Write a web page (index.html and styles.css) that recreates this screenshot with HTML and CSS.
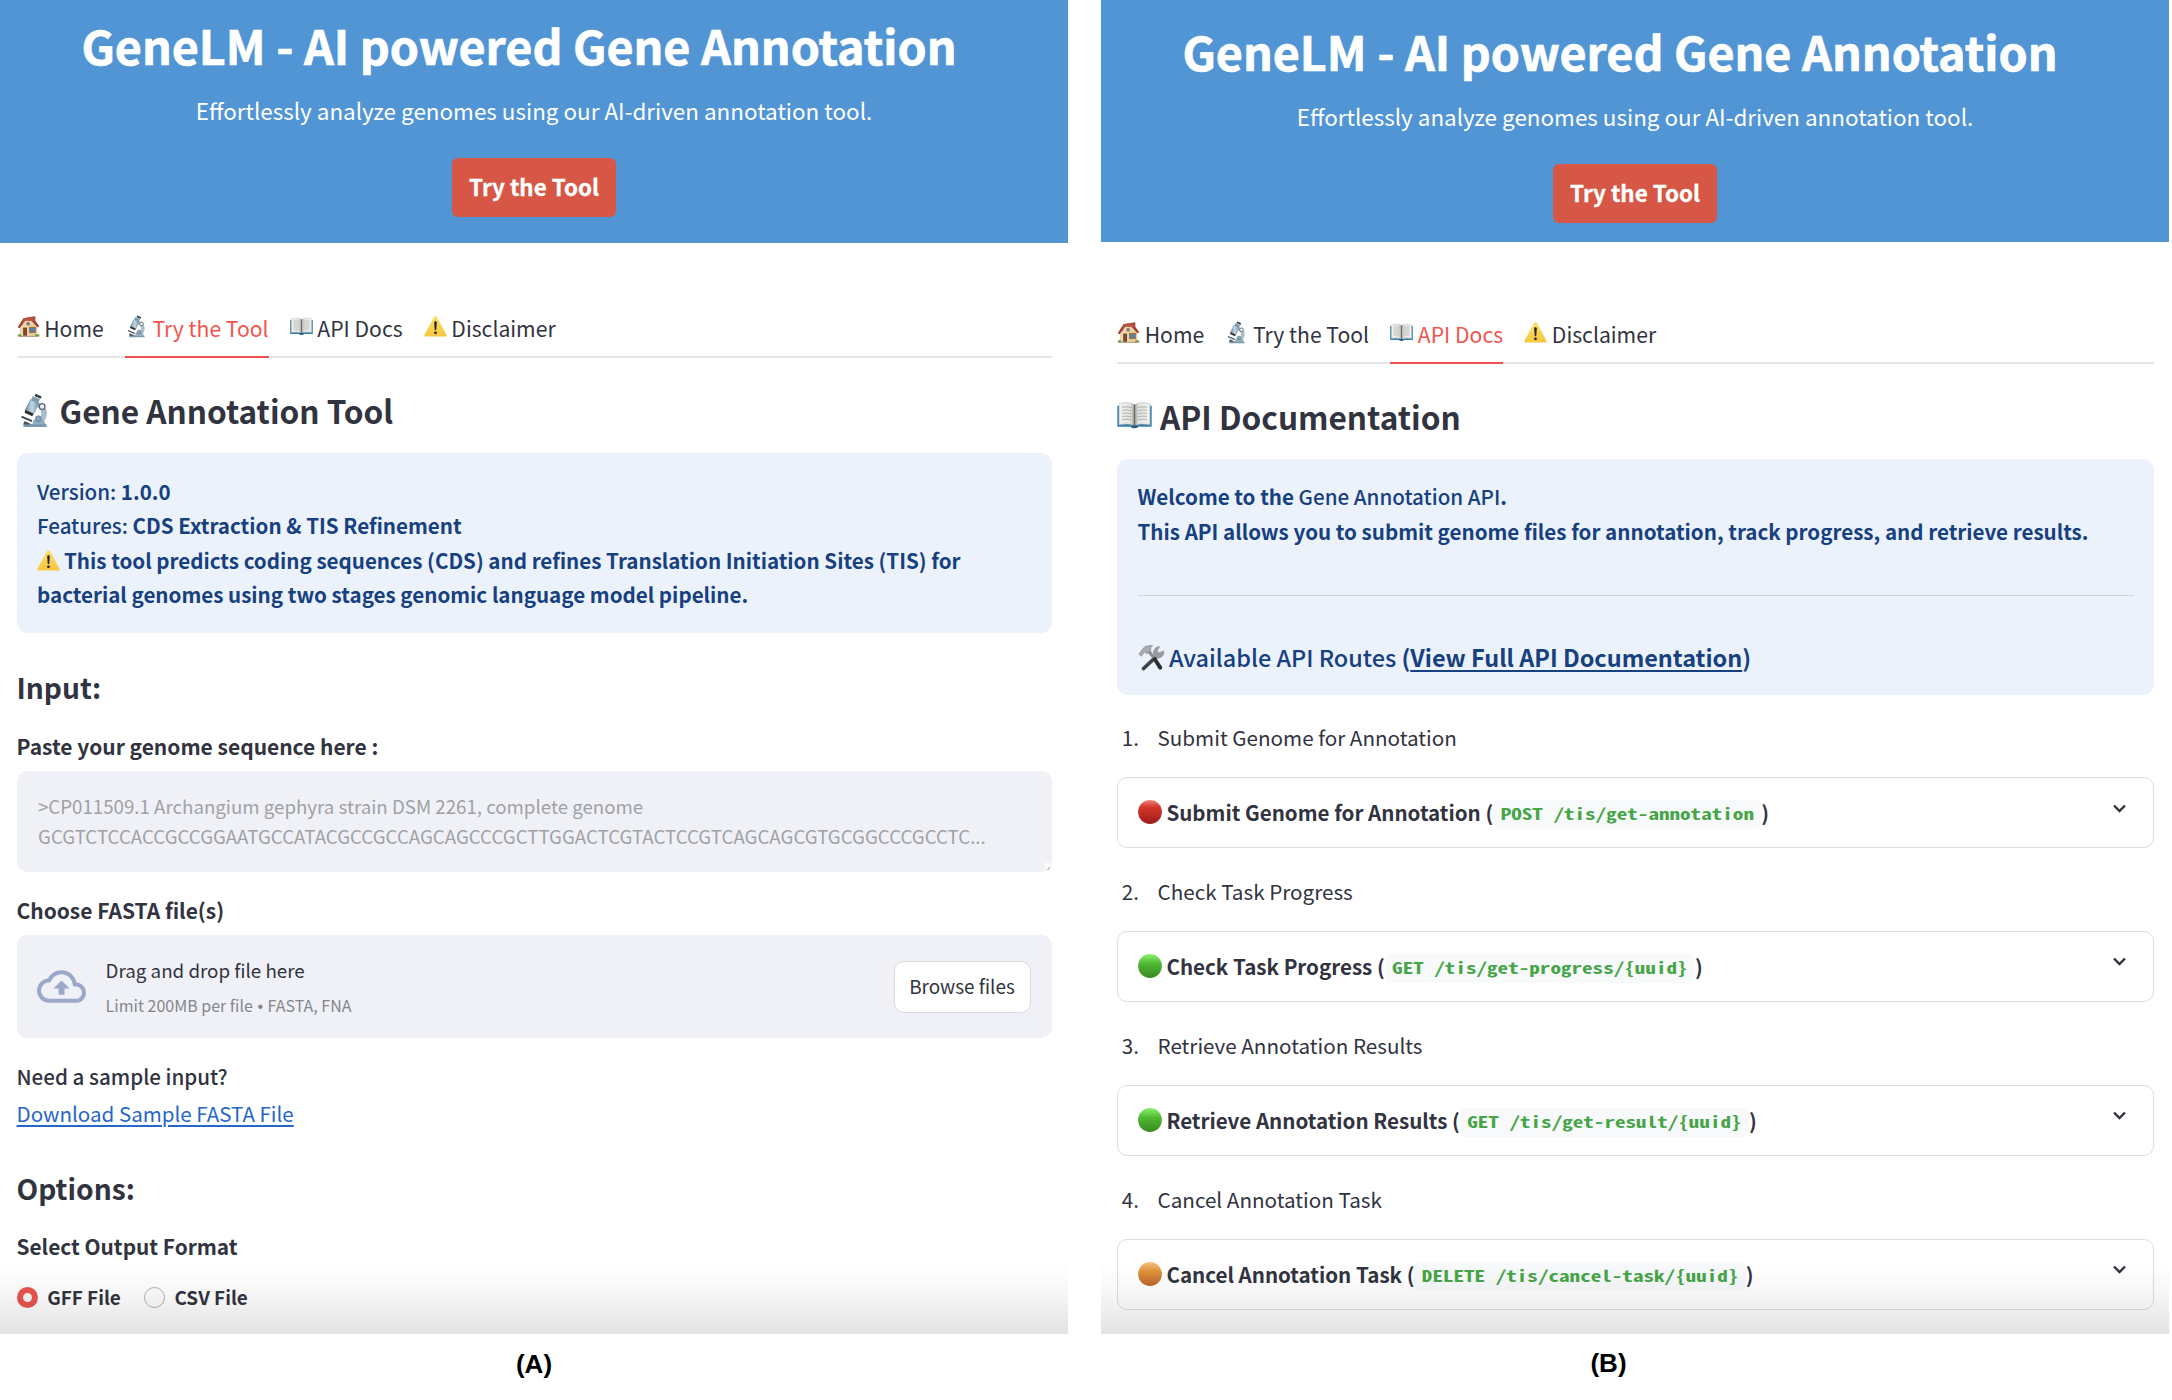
FILE: index.html
```html
<!DOCTYPE html>
<html lang="en">
<head>
<meta charset="utf-8">
<title>GeneLM - AI powered Gene Annotation</title>
<link rel="stylesheet" href="styles.css">
</head>
<body>
<svg class="defs" aria-hidden="true">
  <defs>
    <linearGradient id="g-red" x1="0" y1="0" x2="0" y2="1"><stop offset="0" stop-color="#e8837c"/><stop offset=".3" stop-color="#d5362b"/><stop offset="1" stop-color="#9c1d18"/></linearGradient>
    <linearGradient id="g-green" x1="0" y1="0" x2="0" y2="1"><stop offset="0" stop-color="#8ef06c"/><stop offset=".4" stop-color="#4fb834"/><stop offset="1" stop-color="#38891f"/></linearGradient>
    <linearGradient id="g-orange" x1="0" y1="0" x2="0" y2="1"><stop offset="0" stop-color="#f3c27c"/><stop offset=".4" stop-color="#df9138"/><stop offset="1" stop-color="#b9642a"/></linearGradient>
    <linearGradient id="g-warn" x1="0" y1="0" x2="0" y2="1"><stop offset="0" stop-color="#fbe06a"/><stop offset="1" stop-color="#f7c63f"/></linearGradient>
    <linearGradient id="g-tube" x1="0" y1="0" x2="1" y2="0"><stop offset="0" stop-color="#6e8ba0"/><stop offset=".5" stop-color="#c3d8e6"/><stop offset="1" stop-color="#7390a5"/></linearGradient>
    <linearGradient id="g-page" x1="0" y1="0" x2="1" y2="0"><stop offset="0" stop-color="#f1f1ee"/><stop offset=".75" stop-color="#e2e2df"/><stop offset="1" stop-color="#9c9c9a"/></linearGradient>
    <linearGradient id="g-page2" x1="1" y1="0" x2="0" y2="0"><stop offset="0" stop-color="#f1f1ee"/><stop offset=".75" stop-color="#e2e2df"/><stop offset="1" stop-color="#9c9c9a"/></linearGradient>
  </defs>
  <symbol id="house" viewBox="0 0 32 32">
    <path d="M4 14 16 4l12 10v15H4z" fill="#ecd7ad"/>
    <path d="M17 14h11v15H17z" fill="#e3c995"/>
    <path d="M21.5 2h4v7h-4z" fill="#96463a"/>
    <path d="M1 17 9 4.5 21 2.500l10 13-2.500 1.500L20 8 11.500 7.500 3.500 18.500z" fill="#9c3a2b"/>
    <path d="M9 4.500 21 2.500l5.500 7.500-6.500-2.500-8.500 0-5.500 8z" fill="#b95341"/>
    <path d="M8.5 17.5h5.5V29H8.5z" fill="#7a4a2b"/>
    <path d="M17.5 17.5h8v7h-8z" fill="#4f83ad" stroke="#a86d3a" stroke-width="1.4"/>
    <circle cx="15.5" cy="12.2" r="2.1" fill="#5d88a8" stroke="#a86d3a"/>
    <path d="M1 29.5c0-4 5-4 5.500 0zM25 29.500c0-4 6-4.500 6.500 0z" fill="#6c9a45"/>
    <path d="M2 29h28v1.500H2z" fill="#b79b78"/>
  </symbol>
  <symbol id="microscope" viewBox="0 0 32 32">
    <path d="M20 9.500c7 2.500 9.500 10.500 3.500 17l-4-1.800c5-4.200 4-9.500-.5-12z" fill="#a9bfce" stroke="#7e99ab" stroke-width=".6"/>
    <path d="M6.500 28.300h20l1 2.700h-22z" fill="#7b99af"/>
    <path d="M15 24.500h9.500l1.500 4H14z" fill="#93adc0"/>
    <path d="m4.500 20.800 9.500 4.200-.7 1.500-9.500-4.200z" fill="#3c4348"/>
    <path d="m12.500 6 7.500 3.200-4.800 9.800-7.700-3.400z" fill="url(#g-tube)" stroke="#68869c" stroke-width=".6"/>
    <path d="m14.500 2.800 6.500 2.900-1.800 3.600-6.300-2.800z" fill="#7d9db4"/>
    <path d="m17 .6 5.500 2.700-.9 2-5.500-2.600z" fill="#33383c"/>
    <path d="m7.500 15.600 7.700 3.400-1.200 2.300-7-3.200z" fill="#292e33"/>
    <circle cx="23" cy="12.300" r="2.600" fill="#f0f4f6" stroke="#566773" stroke-width="1.200"/>
    <circle cx="19.500" cy="23.500" r="2.600" fill="#8ba5b8" stroke="#607d91" stroke-width=".8"/>
    <path d="m7 25.500 5 2.300v1H5.500z" fill="#4a545c"/>
  </symbol>
  <symbol id="book" viewBox="0 0 34 32">
    <path d="M.3 6.500h33.400V27H20.500c-.5 2-6.500 2-7 0H.3z" fill="#3a80a8"/>
    <path d="M2 4.500C8 3 13 3.200 17 5.500V26c-4-2-9-2-15-1z" fill="url(#g-page)" stroke="#a9b2b6" stroke-width=".5"/>
    <path d="M32 4.500C26 3 21 3.200 17 5.500V26c4-2 9-2 15-1z" fill="url(#g-page2)" stroke="#a9b2b6" stroke-width=".5"/>
    <path d="M16.400 5.500h1.200V27h-1.200z" fill="#666"/>
    <path d="M5 8c3-.6 6-.5 9 .5M5 11c3-.6 6-.5 9 .5M5 14c3-.6 6-.5 9 .5M5 17c3-.6 6-.5 9 .5M5 20c3-.6 6-.5 9 .5M20 8.500c3-1 6-1.100 9-.5M20 11.500c3-1 6-1.100 9-.5M20 14.500c3-1 6-1.100 9-.5M20 17.500c3-1 6-1.100 9-.5M20 20.500c3-1 6-1.100 9-.5" fill="none" stroke="#a9a9a6" stroke-width=".9"/>
    <path d="M13.500 26.500c1-1 6-1 7 0-.5 2-6.500 2-7 0z" fill="#245874"/>
  </symbol>
  <symbol id="warn" viewBox="0 0 32 32">
    <path d="M16 1.500c.9 0 1.600.5 2.100 1.400l13 24.200c.8 1.600 0 2.900-1.700 2.900H2.600C.9 30 .1 28.700.9 27.100l13-24.200c.5-.9 1.200-1.400 2.100-1.400z" fill="url(#g-warn)"/>
    <path d="M14.200 10.500c0-2.300 3.600-2.300 3.600 0l-.7 9.800c-.1 1.400-2.100 1.400-2.200 0z" fill="#222"/>
    <circle cx="16" cy="24.800" r="1.900" fill="#222"/>
  </symbol>
  <symbol id="tools" viewBox="0 0 32 32">
    <path d="m20.500 12.500 3.200 3L7.500 30.500c-1.600 1-4-1.200-3-3z" fill="#3f4144"/>
    <path d="M18.500 13.500C17 9 19.500 3 25.500 2.500l-2.700 5 2 2.700 5.700-2.400c1 5-3.500 9.200-8.500 8.400z" fill="#9a9da0" stroke="#77797c" stroke-width=".6"/>
    <path d="m11.500 9.500 3-2.500 6 8.500-2.500 2z" fill="#8b8d90"/>
    <path d="m17 17 3.500-2.500 8 12c1 2.500-2.200 4.800-4 2.500z" fill="#2d2e31"/>
    <path d="M1 11.500 6 4.500C9 1.500 13 1 17.500 1.500c-2.500 1-3 2.500-2 5L10.500 11 7.500 9l-3.500 5z" fill="#a9acaf" stroke="#77797c" stroke-width=".6"/>
  </symbol>
  <symbol id="cloud" viewBox="0 0 24 16">
    <path d="M19.350 6.040C18.670 2.590 15.640 0 12 0 9.110 0 6.600 1.640 5.350 4.040 2.340 4.360 0 6.910 0 10c0 3.310 2.690 6 6 6h13c2.760 0 5-2.240 5-5 0-2.640-2.050-4.780-4.650-4.960zM19 14H6c-2.210 0-4-1.790-4-4 0-2.050 1.530-3.760 3.560-3.970l1.070-.11.5-.95C8.080 3.140 9.940 2 12 2c2.620 0 4.880 1.860 5.390 4.430l.3 1.500 1.530.11c1.560.1 2.780 1.410 2.780 2.960 0 1.650-1.350 3-3 3zM8 9h2.550v3h2.900V9H16l-4-4-4 4z"/>
  </symbol>
  <symbol id="chevron" viewBox="0 0 14 9">
    <path d="m1.500 1.500 5.500 5.500 5.500-5.500" fill="none" stroke="#31333f" stroke-width="2.400"/>
  </symbol>
  <symbol id="dot" viewBox="0 0 24 24"><circle cx="12" cy="12" r="11.900"/></symbol>
</svg>

<main class="sheet">
  <figure class="fig">
    <div class="panel">
      <header class="hero">
        <h1 class="hero-title">GeneLM - AI powered Gene Annotation</h1>
        <p class="hero-sub">Effortlessly analyze genomes using our AI-driven annotation tool.</p>
        <a class="hero-btn">Try the Tool</a>
      </header>
      <div class="content">
        <nav class="tabs">
          <a class="tab"><svg class="emoji"><use href="#house"/></svg>Home</a>
          <a class="tab active"><svg class="emoji"><use href="#microscope"/></svg>Try the Tool</a>
          <a class="tab"><svg class="emoji"><use href="#book"/></svg>API Docs</a>
          <a class="tab"><svg class="emoji"><use href="#warn"/></svg>Disclaimer</a>
        </nav>
        <h2 class="heading"><svg class="emoji big"><use href="#microscope"/></svg>Gene Annotation Tool</h2>
        <section class="alert alert-tool">
          <p>Version: <b>1.0.0</b></p>
          <p>Features: <b>CDS Extraction &amp; TIS Refinement</b></p>
          <p><svg class="emoji inline"><use href="#warn"/></svg><b>This tool predicts coding sequences (CDS) and refines Translation Initiation Sites (TIS) for<br>bacterial genomes using two stages genomic language model pipeline.</b></p>
        </section>
        <h3 class="section input">Input:</h3>
        <label class="label">Paste your genome sequence here :</label>
        <div class="textarea">
          <p>&gt;CP011509.1 Archangium gephyra strain DSM 2261, complete genome</p>
          <p>GCGTCTCCACCGCCGGAATGCCATACGCCGCCAGCAGCCCGCTTGGACTCGTACTCCGTCAGCAGCGTGCGGCCCGCCTC...</p>
          <svg class="grip" viewBox="0 0 8 10"><path d="M0 0h8v10H0z" fill="#fafafb"/><path d="m3.500 8 3-3.500M5.500 8l1-1" stroke="#555" stroke-width="1"/></svg>
        </div>
        <label class="label choose">Choose FASTA file(s)</label>
        <div class="dropzone">
          <svg class="cloud"><use href="#cloud"/></svg>
          <div class="drop-text">
            <p class="drop-main">Drag and drop file here</p>
            <p class="drop-limit">Limit 200MB per file <span class="bullet">•</span> FASTA, FNA</p>
          </div>
          <button class="browse">Browse files</button>
        </div>
        <div class="sample">
          <p class="sample-q">Need a sample input?</p>
          <a class="sample-link">Download Sample FASTA File</a>
        </div>
        <h3 class="section options">Options:</h3>
        <label class="label select">Select Output Format</label>
        <div class="radios">
          <span class="radio on"></span><span class="radio-text">GFF File</span>
          <span class="radio"></span><span class="radio-text">CSV File</span>
        </div>
      </div>
      <div class="fade"></div>
    </div>
    <figcaption class="caption">(A)</figcaption>
  </figure>

  <figure class="fig fig-b">
    <div class="panel">
      <header class="hero">
        <h1 class="hero-title">GeneLM - AI powered Gene Annotation</h1>
        <p class="hero-sub">Effortlessly analyze genomes using our AI-driven annotation tool.</p>
        <a class="hero-btn">Try the Tool</a>
      </header>
      <div class="content">
        <nav class="tabs">
          <a class="tab"><svg class="emoji"><use href="#house"/></svg>Home</a>
          <a class="tab"><svg class="emoji"><use href="#microscope"/></svg>Try the Tool</a>
          <a class="tab active"><svg class="emoji"><use href="#book"/></svg>API Docs</a>
          <a class="tab"><svg class="emoji"><use href="#warn"/></svg>Disclaimer</a>
        </nav>
        <h2 class="heading"><svg class="emoji big"><use href="#book"/></svg>API Documentation</h2>
        <section class="alert alert-api">
          <p><b>Welcome to the</b> Gene Annotation API<b>.</b></p>
          <p><b>This API allows you to submit genome files for annotation, track progress, and retrieve results.</b></p>
          <hr class="rule">
          <h4 class="routes"><svg class="emoji tool"><use href="#tools"/></svg><span>Available API Routes <b>(<a class="full-docs">View Full API Documentation</a>)</b></span></h4>
        </section>
        <p class="step"><span class="num">1.</span>Submit Genome for Annotation</p>
        <div class="card"><svg class="dot" fill="url(#g-red)"><use href="#dot"/></svg><span>Submit Genome for Annotation (</span><code class="code"><span>POST /tis/get-annotation</span></code><span>)</span><svg class="chevron"><use href="#chevron"/></svg></div>
        <p class="step"><span class="num">2.</span>Check Task Progress</p>
        <div class="card"><svg class="dot" fill="url(#g-green)"><use href="#dot"/></svg><span>Check Task Progress (</span><code class="code"><span>GET /tis/get-progress/{uuid}</span></code><span>)</span><svg class="chevron"><use href="#chevron"/></svg></div>
        <p class="step"><span class="num">3.</span>Retrieve Annotation Results</p>
        <div class="card"><svg class="dot" fill="url(#g-green)"><use href="#dot"/></svg><span>Retrieve Annotation Results (</span><code class="code"><span>GET /tis/get-result/{uuid}</span></code><span>)</span><svg class="chevron"><use href="#chevron"/></svg></div>
        <p class="step"><span class="num">4.</span>Cancel Annotation Task</p>
        <div class="card"><svg class="dot" fill="url(#g-orange)"><use href="#dot"/></svg><span>Cancel Annotation Task (</span><code class="code"><span>DELETE /tis/cancel-task/{uuid}</span></code><span>)</span><svg class="chevron"><use href="#chevron"/></svg></div>
      </div>
      <div class="fade"></div>
    </div>
    <figcaption class="caption">(B)</figcaption>
  </figure>
</main>
</body>
</html>
```
FILE: styles.css
```css
* { box-sizing: border-box; margin: 0; padding: 0; }
body {
  background: #fff;
  color: #31333f;
  font-family: "Noto Sans CJK SC", "Noto Sans", sans-serif;
}
p, a, b, label, span, h1, h2, h3, h4 { white-space: nowrap; }
svg { display: block; flex: none; }
.defs { position: absolute; width: 0; height: 0; }

.sheet { display: flex; gap: 33px; width: 2172px; height: 1400px; overflow: hidden; }
.fig { width: 1068px; flex: none; }
.panel { position: relative; height: 1334px; overflow: hidden; background: #fff; }
.content { padding: 0 16px 0 16.500px; }
.fig-b .content { padding: 0 15px 0 16px; }
.fade {
  position: absolute; left: 0; right: 0; bottom: 0; height: 72px;
  background: linear-gradient(rgba(0,0,0,0), rgba(0,0,0,.035) 45%, rgba(0,0,0,.115));
}
.caption {
  margin-top: 10px; text-align: center; color: #000;
  font: bold 26px/40px "Liberation Sans", Arial, sans-serif;
}
.fig-b .caption { margin-top: 9px; padding-right: 53px; }

/* Hero */
.hero {
  display: flex; flex-direction: column; align-items: center;
  height: 243px; padding-top: 14.600px; background: #5195d5; color: #fff;
}
.fig-b .hero { height: 242px; padding-top: 20.600px; }
.hero-title {
  margin-right: 30px; font-size: 46.620px; line-height: 60px; font-weight: 700;
  -webkit-text-stroke: .7px #fff;
}
.hero-sub { margin-top: 18.400px; font-size: 22.440px; line-height: 34px; }
.hero-btn {
  margin-top: 31px; width: 164px; height: 59px; border-radius: 6px;
  background: #d65745; text-align: center; -webkit-text-stroke: .3px #fff;
  font-size: 22.400px; line-height: 56px; font-weight: 700;
}

/* Tabs */
.tabs { display: flex; gap: 21.100px; height: 45px; margin-top: 69.500px; box-shadow: inset 0 -2px #e6e6e8; }
.fig-b .tabs { margin-top: 76.500px; }
.tab { display: flex; height: 45px; font-size: 21.150px; line-height: 30px; }
.tab.active { color: #f0544f; border-bottom: 2.500px solid #ee514d; }
.emoji { width: 23px; height: 25px; margin: 1.500px 4.700px 0 0; }

.heading { display: flex; margin-top: 29.500px; font-size: 31.600px; line-height: 46px; font-weight: 700; }
.fig-b .heading { margin-top: 29px; }
.emoji.big { width: 35px; height: 35px; margin: 5.500px 8px 0 0; }

/* Alerts */
.alert {
  margin-top: 20.300px; padding: 20.300px 20.500px 0; border-radius: 11px;
  background: #ebf2fc; color: #17407f;
  font-size: 20.580px; line-height: 34.600px; font-weight: 500;
}
.alert b { font-weight: 700; }
.alert-tool { height: 179.400px; }
.alert-api { height: 236px; }
.emoji.inline { display: inline-block; height: 23px; margin: 0 4px 0 0; vertical-align: -3px; }
.rule { height: 1px; margin-top: 47.200px; border: 0; background: #ccd3de; }
.routes { display: flex; margin-top: 45px; font-size: 23.450px; line-height: 32px; font-weight: 500; }
.emoji.tool { width: 27px; height: 28px; margin: 2.500px 4.400px 0 0; }
.full-docs { text-decoration: underline; text-decoration-thickness: 2px; text-underline-offset: 3px; }

/* Form */
.section { font-size: 28.200px; line-height: 40px; font-weight: 700; }
.input { margin-top: 34.800px; }
.options { margin-top: 36.400px; }
.label { display: block; margin-top: 23.600px; font-size: 20.980px; line-height: 30px; font-weight: 700; }
.textarea {
  position: relative; height: 101px; margin-top: 9.500px; padding: 20.700px 20.500px 0 21.500px;
  border-radius: 10px; background: #f0f1f6; color: #a0a1a7; overflow: hidden;
  font-size: 18.700px; line-height: 29.700px;
}
.grip { position: absolute; right: 0; bottom: 0; width: 8px; height: 9px; }
.choose { margin-top: 23.500px; }
.select { font-size: 20.850px; }
.dropzone {
  display: flex; align-items: center; height: 103px; margin-top: 10.200px;
  padding: 0 21.500px 0 20.500px; border-radius: 10px; background: #f0f1f6;
}
.cloud { width: 49px; height: 33px; fill: #9ba8c9; }
.drop-text { flex: 1; margin-left: 19.600px; }
.drop-main { font-size: 18.750px; line-height: 29px; }
.drop-limit { margin-top: 9.800px; font-size: 16px; line-height: 22px; color: #85868d; }
.bullet { margin: 0 1px; font-family: "Liberation Sans", sans-serif; }
.browse {
  width: 137px; height: 51.500px; padding-bottom: 2px; border: 1px solid #d9dade; border-radius: 10px;
  background: #fff; color: #31333f; font-family: inherit; font-size: 18.900px;
}
.sample { margin-top: 19.800px; line-height: 36.600px; }
.sample-q { font-size: 20.600px; font-weight: 500; }
.sample-link {
  display: block; font-size: 20.560px; color: #2766c6;
  text-decoration: underline; text-decoration-thickness: 1.500px; text-underline-offset: 3px;
}
.radios { display: flex; align-items: center; height: 22px; margin-top: 25.600px; }
.radio { width: 21px; height: 21px; border: 1.500px solid #aeafb3; border-radius: 50%; background: #fcfcfc; }
.radio.on { border: 6.500px solid #ea5450; background: #f6f6f6; }
.radio-text { margin: -2px 23px 0 9.700px; font-size: 18.900px; line-height: 22px; font-weight: 700; }

/* API routes */
.step { display: flex; margin-top: 28px; font-size: 20.650px; line-height: 30px; }
.alert + .step { margin-top: 27.200px; }
.num { width: 40.500px; padding-left: 4.800px; }
.card {
  display: flex; align-items: center; height: 70.600px; margin-top: 25.300px;
  padding: 0 26px 0 20px; border: 1.500px solid #dcdde0; border-radius: 10px;
  font-size: 20.570px; font-weight: 700; line-height: 30px;
}
.card > span { margin-top: -1.500px; }
.dot { width: 24px; height: 24px; margin: -1px 4.400px 0 0; }
.code {
  height: 29.500px; margin-top: 4.300px; padding: 0 7.400px; border-radius: 6px;
  background: #f8f9fb; color: #46a546;
  font: 700 21.120px/29.500px "Noto Sans Mono CJK SC", "Liberation Mono", monospace;
}
/* Wide, low monospace letters: full advance width with reduced height */
.code > span { display: block; white-space: pre; transform-origin: 0 24px; transform: translateY(-3px) scaleY(.748); }
.chevron { width: 15px; height: 9px; margin: -9px 0 0 auto; }
```
